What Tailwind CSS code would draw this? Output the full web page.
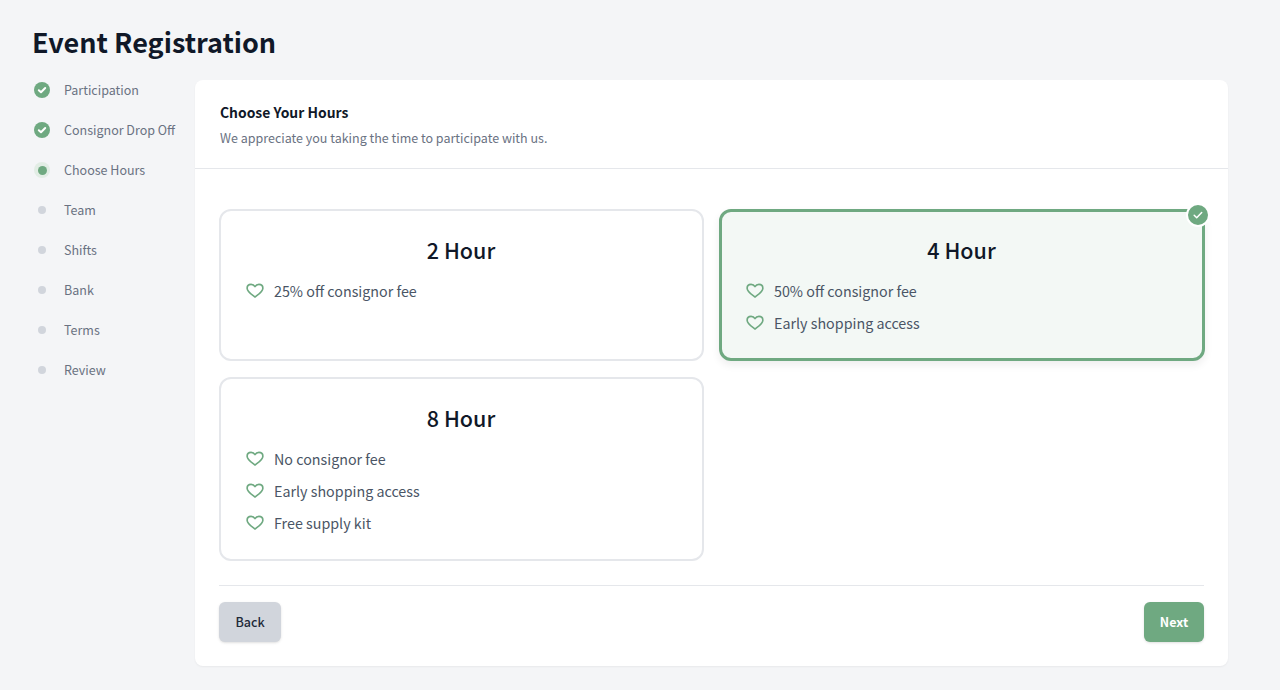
<!DOCTYPE html>
<html lang="en">

<head>
    <meta charset="UTF-8">
    <title>Event Registration</title>
    <script src="https://cdn.jsdelivr.net/npm/@tailwindcss/browser@4"></script>
</head>

<body class="bg-[#f4f5f7] h-[690px] overflow-hidden font-['Noto_Sans_CJK_SC',sans-serif]">
    <div class="pl-8 pr-[52px] pt-6">
        <h1 class="text-[27px] leading-9 font-bold text-gray-900 mb-[10px]">Event Registration</h1>
        <div class="flex">
            <!-- steps -->
            <div class="w-[163px] shrink-0 text-[12.5px] text-gray-500">
                <div class="h-10 flex items-center gap-[14px] pl-[2px]">
                    <svg class="w-4 h-4 shrink-0" viewBox="0 0 16 16"><circle cx="8" cy="8" r="8" fill="#6fa981"/><path d="M4.8 8.2l2.2 2.1 4.2-4.3" fill="none" stroke="#fff" stroke-width="2" stroke-linecap="round" stroke-linejoin="round"/></svg>
                    <span>Participation</span>
                </div>
                <div class="h-10 flex items-center gap-[14px] pl-[2px]">
                    <svg class="w-4 h-4 shrink-0" viewBox="0 0 16 16"><circle cx="8" cy="8" r="8" fill="#6fa981"/><path d="M4.8 8.2l2.2 2.1 4.2-4.3" fill="none" stroke="#fff" stroke-width="2" stroke-linecap="round" stroke-linejoin="round"/></svg>
                    <span class="whitespace-nowrap">Consignor Drop Off</span>
                </div>
                <div class="h-10 flex items-center gap-[14px] pl-[2px]">
                    <span class="w-4 h-4 rounded-full bg-[#e2ede5] flex items-center justify-center"><span class="w-[9px] h-[9px] rounded-full bg-[#6fa981]"></span></span>
                    <span>Choose Hours</span>
                </div>
                <div class="h-10 flex items-center gap-[14px] pl-[2px]"><span class="w-4 h-4 flex items-center justify-center"><span class="w-2 h-2 rounded-full bg-gray-300"></span></span><span>Team</span></div>
                <div class="h-10 flex items-center gap-[14px] pl-[2px]"><span class="w-4 h-4 flex items-center justify-center"><span class="w-2 h-2 rounded-full bg-gray-300"></span></span><span>Shifts</span></div>
                <div class="h-10 flex items-center gap-[14px] pl-[2px]"><span class="w-4 h-4 flex items-center justify-center"><span class="w-2 h-2 rounded-full bg-gray-300"></span></span><span>Bank</span></div>
                <div class="h-10 flex items-center gap-[14px] pl-[2px]"><span class="w-4 h-4 flex items-center justify-center"><span class="w-2 h-2 rounded-full bg-gray-300"></span></span><span>Terms</span></div>
                <div class="h-10 flex items-center gap-[14px] pl-[2px]"><span class="w-4 h-4 flex items-center justify-center"><span class="w-2 h-2 rounded-full bg-gray-300"></span></span><span>Review</span></div>
            </div>

            <!-- main card -->
            <div class="w-[1033px] h-[586px] mt-[10px] bg-white rounded-lg shadow-xs">
                <div class="h-[89px] px-[25px] pt-[22px] border-b border-gray-200">
                    <h2 class="text-[13.9px] leading-5 font-semibold text-gray-900">Choose Your Hours</h2>
                    <p class="mt-[6px] text-[12.5px] leading-5 text-gray-500">We appreciate you taking the time to participate with us.</p>
                </div>
                <div class="px-6 pt-10">
                    <div class="grid grid-cols-[485px_486px] gap-x-[15px] gap-y-4 pb-6 border-b border-gray-200">
                        <div class="h-[152px] rounded-xl border-2 border-gray-200 bg-white pl-[25px] pr-[26px] pt-[25px]">
                            <h3 class="text-[21.500px] leading-7 font-medium text-gray-900 text-center">2 Hour</h3>
                            <ul class="mt-[11px] text-[14.300px] text-gray-600">
                                <li class="h-8 flex items-center gap-[10px]"><svg class="w-[18px] h-[18px] shrink-0" viewBox="0 0 24 24" fill="none" stroke="#6fa981" stroke-width="2.200" stroke-linejoin="round"><path d="M12 20C9 17.600 1.500 13.200 1.500 8.200 1.500 5.200 3.900 3.200 6.800 3.200c2.200 0 4 1 5.200 3 1.200-2 3-3 5.200-3 2.900 0 5.300 2 5.300 5 0 5-7.500 9.400-10.500 11.800z"/></svg>25% off consignor fee</li>
                            </ul>
                        </div>
                        <div class="relative h-[152px] rounded-xl border-[3px] border-[#6fa981] bg-[#f3f8f5] shadow-[0_4px_8px_rgba(0,0,0,0.07)] pl-6 pr-[25px] pt-6">
                            <h3 class="text-[21.500px] leading-7 font-medium text-gray-900 text-center">4 Hour</h3>
                            <ul class="mt-[11px] text-[14.300px] text-gray-600">
                                <li class="h-8 flex items-center gap-[10px]"><svg class="w-[18px] h-[18px] shrink-0" viewBox="0 0 24 24" fill="none" stroke="#6fa981" stroke-width="2.200" stroke-linejoin="round"><path d="M12 20C9 17.600 1.500 13.200 1.500 8.200 1.500 5.200 3.900 3.200 6.800 3.200c2.200 0 4 1 5.200 3 1.200-2 3-3 5.200-3 2.900 0 5.300 2 5.300 5 0 5-7.500 9.400-10.500 11.800z"/></svg>50% off consignor fee</li>
                                <li class="h-8 flex items-center gap-[10px]"><svg class="w-[18px] h-[18px] shrink-0" viewBox="0 0 24 24" fill="none" stroke="#6fa981" stroke-width="2.200" stroke-linejoin="round"><path d="M12 20C9 17.600 1.500 13.200 1.500 8.200 1.500 5.200 3.900 3.200 6.800 3.200c2.200 0 4 1 5.200 3 1.200-2 3-3 5.200-3 2.900 0 5.300 2 5.300 5 0 5-7.500 9.400-10.500 11.800z"/></svg>Early shopping access</li>
                            </ul>
                            <span class="absolute -top-[9px] -right-[8px] w-6 h-6 rounded-full bg-[#6fa981] border-2 border-white flex items-center justify-center">
                                <svg class="w-3 h-3" viewBox="0 0 12 12" fill="none" stroke="#fff" stroke-width="1.500" stroke-linecap="round" stroke-linejoin="round"><path d="M2.200 6.300l2.500 2.400 5-5.200"/></svg>
                            </span>
                        </div>
                        <div class="h-[184px] rounded-xl border-2 border-gray-200 bg-white pl-[25px] pr-[26px] pt-[25px]">
                            <h3 class="text-[21.500px] leading-7 font-medium text-gray-900 text-center">8 Hour</h3>
                            <ul class="mt-[11px] text-[14.300px] text-gray-600">
                                <li class="h-8 flex items-center gap-[10px]"><svg class="w-[18px] h-[18px] shrink-0" viewBox="0 0 24 24" fill="none" stroke="#6fa981" stroke-width="2.200" stroke-linejoin="round"><path d="M12 20C9 17.600 1.500 13.200 1.500 8.200 1.500 5.200 3.900 3.200 6.800 3.200c2.200 0 4 1 5.200 3 1.200-2 3-3 5.200-3 2.900 0 5.300 2 5.300 5 0 5-7.500 9.400-10.500 11.800z"/></svg>No consignor fee</li>
                                <li class="h-8 flex items-center gap-[10px]"><svg class="w-[18px] h-[18px] shrink-0" viewBox="0 0 24 24" fill="none" stroke="#6fa981" stroke-width="2.200" stroke-linejoin="round"><path d="M12 20C9 17.600 1.500 13.200 1.500 8.200 1.500 5.200 3.900 3.200 6.800 3.200c2.200 0 4 1 5.200 3 1.200-2 3-3 5.200-3 2.900 0 5.300 2 5.300 5 0 5-7.500 9.400-10.500 11.800z"/></svg>Early shopping access</li>
                                <li class="h-8 flex items-center gap-[10px]"><svg class="w-[18px] h-[18px] shrink-0" viewBox="0 0 24 24" fill="none" stroke="#6fa981" stroke-width="2.200" stroke-linejoin="round"><path d="M12 20C9 17.600 1.500 13.200 1.500 8.200 1.500 5.200 3.900 3.200 6.800 3.200c2.200 0 4 1 5.200 3 1.200-2 3-3 5.200-3 2.900 0 5.300 2 5.300 5 0 5-7.500 9.400-10.500 11.800z"/></svg>Free supply kit</li>
                            </ul>
                        </div>
                    </div>
                    <div class="flex justify-between pt-4">
                        <button class="w-[62px] h-10 rounded-md bg-gray-300 text-[12.5px] font-medium text-gray-800 shadow-sm">Back</button>
                        <button class="w-[60px] h-10 rounded-md bg-[#6fa981] text-[12.5px] font-semibold text-white shadow-sm">Next</button>
                    </div>
                </div>
            </div>
        </div>
    </div>
</body>

</html>
